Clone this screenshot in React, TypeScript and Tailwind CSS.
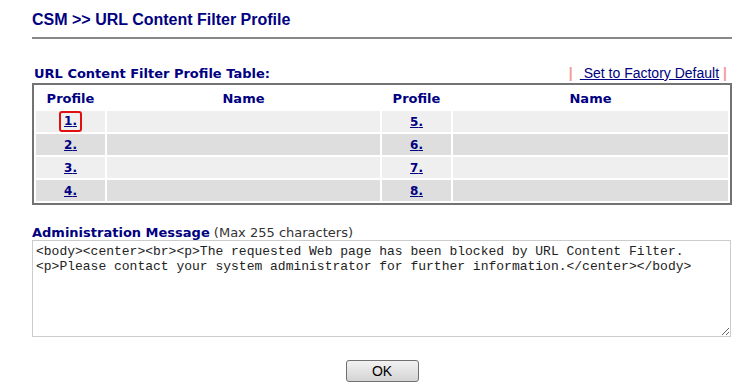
import React from 'react';

const navy = 'text-[#000080]';

const rows = [
  { a: 1, b: 5, bg: 'bg-[#efefef]' },
  { a: 2, b: 6, bg: 'bg-[#dedede]' },
  { a: 3, b: 7, bg: 'bg-[#efefef]' },
  { a: 4, b: 8, bg: 'bg-[#dedede]' },
];

const message =
  '<body><center><br><p>The requested Web page has been blocked by URL Content Filter.\n<p>Please contact your system administrator for further information.</center></body>';

export default function App() {
  return (
    <div className="w-[746px] h-[387px] bg-white overflow-hidden">
      <div className="ml-[32px] w-[700px] pt-[11px]">
        {/* Page title */}
        <h1 className={`font-['Liberation_Sans',Arial,sans-serif] font-bold text-[16px] leading-[18px] ${navy}`}>
          CSM &gt;&gt; URL Content Filter Profile
        </h1>
        <div className="mt-[8px] h-[2px] bg-[#888888]" />

        {/* Table caption + factory default link */}
        <div className="mt-[26px] flex items-end justify-between h-[16px]">
          <span className={`ml-[2px] font-['DejaVu_Sans',Verdana,sans-serif] font-bold text-[13px] leading-[15px] ${navy}`}>
            URL Content Filter Profile Table:
          </span>
          <span className="font-['Liberation_Sans',Arial,sans-serif] text-[14px] leading-[16px] mr-[5px]">
            <span className="text-[#f49a9a] font-bold">|</span>
            <a href="#" className={`ml-[7px] underline ${navy}`}>
              &nbsp;Set to Factory Default
            </a>
            <span className="ml-[4px] text-[#f49a9a] font-bold">|</span>
          </span>
        </div>

        {/* Profile table */}
        <table className="mt-[2px] w-[700px] border-2 border-[#737373] border-separate border-spacing-[2px] font-['DejaVu_Sans',Verdana,sans-serif] text-[12px]">
          <thead>
            <tr className={`h-[22px] ${navy} text-[13px]`}>
              <th className="w-[69px] font-bold pt-[2px]">Profile</th>
              <th className="w-[273px] font-bold pt-[2px]">Name</th>
              <th className="w-[69px] font-bold pt-[2px]">Profile</th>
              <th className="font-bold pt-[2px]">Name</th>
            </tr>
          </thead>
          <tbody>
            {rows.map((r) => (
              <tr key={r.a} className="h-[21px]">
                <td className={`${r.bg} text-center p-0`}>
                  <a
                    href="#"
                    className={`font-bold underline ${navy} ${
                      r.a === 1 ? 'inline-block px-[3px] border-2 border-[#e01010] rounded-[3px] leading-[17px] align-middle' : ''
                    }`}
                  >
                    {r.a}.
                  </a>
                </td>
                <td className={r.bg} />
                <td className={`${r.bg} text-center`}>
                  <a href="#" className={`font-bold underline ${navy}`}>
                    {r.b}.
                  </a>
                </td>
                <td className={r.bg} />
              </tr>
            ))}
          </tbody>
        </table>

        {/* Administration message */}
        <div className="mt-[20px] font-['DejaVu_Sans',Verdana,sans-serif] text-[13px] leading-[15px]">
          <span className={`font-bold ${navy}`}>Administration Message</span>
          <span className="text-[#333333]"> (Max 255 characters)</span>
        </div>
        <textarea
          readOnly
          defaultValue={message}
          className="block w-[699px] h-[97px] border border-[#cccccc] px-[3px] pt-[3px] font-['Liberation_Mono','Courier_New',monospace] text-[13px] leading-[15px] text-[#222222] outline-none"
        />

        {/* Action */}
        <div className="mt-[23px] flex justify-center">
          <button className="w-[73px] h-[22px] rounded-[3px] border border-[#707070] bg-gradient-to-b from-[#f2f2f2] to-[#d4d4d4] font-['Liberation_Sans',Arial,sans-serif] text-[14px] text-black leading-none">
            OK
          </button>
        </div>
      </div>
    </div>
  );
}
